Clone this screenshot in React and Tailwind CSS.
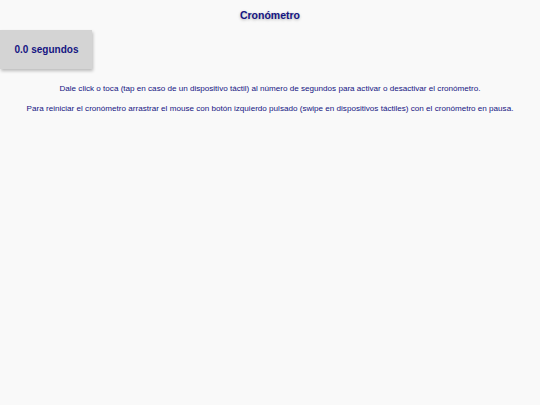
import { useState, useRef, useEffect } from 'react';

const App = () => {
  const [seconds, setSeconds] = useState(0);
  const [running, setRunning] = useState(false);
  const timer = useRef(null);

  useEffect(() => {
    if (running) {
      timer.current = setInterval(() => setSeconds((s) => s + 0.1), 100);
    }
    return () => clearInterval(timer.current);
  }, [running]);

  return (
    <div
      className="min-h-screen w-full bg-[#f9f9f9] text-[#141482]"
      style={{ fontFamily: '"Liberation Sans", Arial, sans-serif' }}
    >
      <h1 className="pt-[9px] text-center text-[10.5px] font-bold leading-[13px] [text-shadow:0_1px_3px_rgba(0,0,0,0.3)]">
        Cronómetro
      </h1>
      <div className="mt-[8px] flex">
        <button
          onClick={() => setRunning((r) => !r)}
          className="flex h-[39px] w-[92px] items-center justify-center bg-[#d4d4d4] pl-[1px] text-[10px] font-bold text-[#141482] shadow-[1px_2px_3px_rgba(0,0,0,0.25)]"
        >
          {seconds.toFixed(1)} segundos
        </button>
      </div>
      <div className="mt-[15px] space-y-[11px] text-center text-[8.1px] leading-[9px]">
        <p>
          Dale click o toca (tap en caso de un dispositivo táctil) al número de segundos para activar o desactivar el cronómetro.
        </p>
        <p>
          Para reiniciar el cronómetro arrastrar el mouse con botón izquierdo pulsado (swipe en dispositivos táctiles) con el cronómetro en pausa.
        </p>
      </div>
    </div>
  );
};

export default App;
